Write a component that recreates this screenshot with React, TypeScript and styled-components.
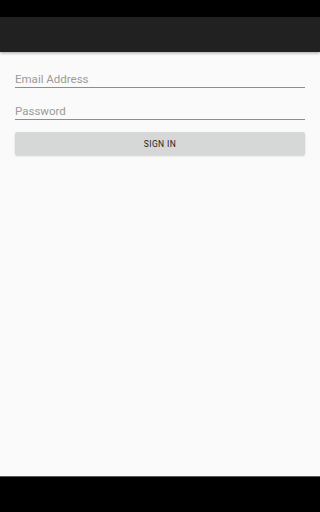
import styled, { createGlobalStyle } from 'styled-components';

const GlobalStyle = createGlobalStyle`
    html, body {
        margin: 0;
        padding: 0;
        height: 100%;
        background: #000;
    }
    #root {
        height: 100%;
    }
    * {
        box-sizing: border-box;
    }
`;

const Screen = styled.div`
    display: flex;
    flex-direction: column;
    width: 100%;
    height: 100vh;
    min-height: 512px;
    font-family: Roboto, 'Noto Sans', sans-serif;
    overflow: hidden;
`;
const StatusBar = styled.div`
    height: 17px;
    background: #000;
    flex-shrink: 0;
`;
const AppBar = styled.div`
    height: 35px;
    background: #212121;
    flex-shrink: 0;
    position: relative;
    z-index: 1;
    box-shadow: 0 1px 3px rgba(0, 0, 0, 0.35);
`;
const Content = styled.div`
    flex: 1;
    background: #fafafa;
    padding: 19px 15px 0;
    display: flex;
    flex-direction: column;
`;
const Field = styled.input<{ $gap?: number }>`
    display: block;
    width: 100%;
    height: 17px;
    margin: 0 0 ${p => p.$gap ?? 15}px;
    padding: 0;
    border: none;
    border-bottom: 1px solid #8e8e8e;
    background: transparent;
    font-family: Roboto, sans-serif;
    font-size: 11.5px;
    line-height: 16px;
    color: #212121;
    outline: none;
    &::placeholder {
        color: #9b9b9b;
    }
`;
const Button = styled.button`
    height: 23px;
    width: 100%;
    border: none;
    border-radius: 2px;
    background: #d6d7d7;
    box-shadow: 0 1px 2px rgba(0, 0, 0, 0.18);
    font-family: Roboto, sans-serif;
    font-size: 8.5px;
    font-weight: 400;
    letter-spacing: 0.4px;
    color: #1e1e1e;
    padding: 0;
`;
const NavBar = styled.div`
    height: 36px;
    flex-shrink: 0;
    background: #000;
    border-top: 1px solid #5a5a5a;
`;

export default function App() {
    return (
        <>
            <GlobalStyle />
            <Screen>
                <StatusBar />
                <AppBar />
                <Content>
                    <Field type="email" placeholder="Email Address" />
                    <Field type="password" placeholder="Password" $gap={12} />
                    <Button>SIGN IN</Button>
                </Content>
                <NavBar />
            </Screen>
        </>
    );
}
